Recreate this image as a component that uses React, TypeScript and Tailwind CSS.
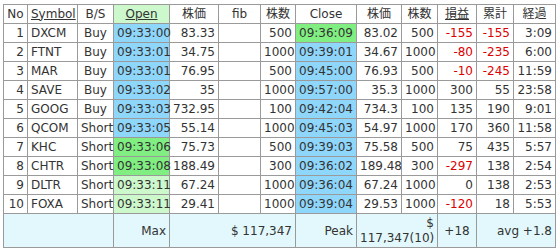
const font = { fontFamily: '"DejaVu Sans", "Noto Sans CJK JP", sans-serif' };

type Row = {
  no: number;
  sym: string;
  bs: string;
  open: string;
  openBg: string;
  price: string;
  qty: string;
  close: string;
  closeBg: string;
  cprice: string;
  cqty: string;
  pl: number;
  cum: number;
  elapsed: string;
};

const BLUE = "bg-[#8fd6fb]";
const GREEN = "bg-[#80ee80]";
const PALE = "bg-[#ccf8cc]";

const rows: Row[] = [
  { no: 1, sym: "DXCM", bs: "Buy", open: "09:33:00", openBg: BLUE, price: "83.33", qty: "500", close: "09:36:09", closeBg: GREEN, cprice: "83.02", cqty: "500", pl: -155, cum: -155, elapsed: "3:09" },
  { no: 2, sym: "FTNT", bs: "Buy", open: "09:33:01", openBg: BLUE, price: "34.75", qty: "1000", close: "09:39:01", closeBg: BLUE, cprice: "34.67", cqty: "1000", pl: -80, cum: -235, elapsed: "6:00" },
  { no: 3, sym: "MAR", bs: "Buy", open: "09:33:01", openBg: BLUE, price: "76.95", qty: "500", close: "09:45:00", closeBg: BLUE, cprice: "76.93", cqty: "500", pl: -10, cum: -245, elapsed: "11:59" },
  { no: 4, sym: "SAVE", bs: "Buy", open: "09:33:02", openBg: BLUE, price: "35", qty: "1000", close: "09:57:00", closeBg: BLUE, cprice: "35.3", cqty: "1000", pl: 300, cum: 55, elapsed: "23:58" },
  { no: 5, sym: "GOOG", bs: "Buy", open: "09:33:03", openBg: BLUE, price: "732.95", qty: "100", close: "09:42:04", closeBg: BLUE, cprice: "734.3", cqty: "100", pl: 135, cum: 190, elapsed: "9:01" },
  { no: 6, sym: "QCOM", bs: "Short", open: "09:33:05", openBg: BLUE, price: "55.14", qty: "1000", close: "09:45:03", closeBg: BLUE, cprice: "54.97", cqty: "1000", pl: 170, cum: 360, elapsed: "11:58" },
  { no: 7, sym: "KHC", bs: "Short", open: "09:33:06", openBg: GREEN, price: "75.73", qty: "500", close: "09:39:03", closeBg: BLUE, cprice: "75.58", cqty: "500", pl: 75, cum: 435, elapsed: "5:57" },
  { no: 8, sym: "CHTR", bs: "Short", open: "09:33:08", openBg: GREEN, price: "188.49", qty: "300", close: "09:36:02", closeBg: BLUE, cprice: "189.48", cqty: "300", pl: -297, cum: 138, elapsed: "2:54" },
  { no: 9, sym: "DLTR", bs: "Short", open: "09:33:11", openBg: PALE, price: "67.24", qty: "1000", close: "09:36:04", closeBg: BLUE, cprice: "67.24", cqty: "1000", pl: 0, cum: 138, elapsed: "2:53" },
  { no: 10, sym: "FOXA", bs: "Short", open: "09:33:11", openBg: PALE, price: "29.41", qty: "1000", close: "09:39:04", closeBg: BLUE, cprice: "29.53", cqty: "1000", pl: -120, cum: 18, elapsed: "5:53" },
];

const widths = [24, 50, 36, 56, 49, 42, 35, 61, 45, 36, 39, 37, 42];

const td = "border border-[#9a9a9a] px-[3px] h-[19px] leading-[17px] whitespace-nowrap";
const th = `${td} font-normal text-center`;

export default function App() {
  return (
    <div className="bg-white w-[559px] h-[252px] pl-[3px] pt-[4px] text-[12px] text-[#333]" style={font}>
      <table className="table-fixed border-collapse w-[552px]">
        <colgroup>
          {widths.map((w, i) => (
            <col key={i} style={{ width: w }} />
          ))}
        </colgroup>
        <thead>
          <tr>
            <th className={th}>No</th>
            <th className={th}><span className="underline">Symbol</span></th>
            <th className={th}>B/S</th>
            <th className={`${th} bg-[#ccf8cc]`}><span className="underline">Open</span></th>
            <th className={th}>株価</th>
            <th className={th}>fib</th>
            <th className={th}>株数</th>
            <th className={th}>Close</th>
            <th className={th}>株価</th>
            <th className={th}>株数</th>
            <th className={th}><span className="underline">損益</span></th>
            <th className={th}>累計</th>
            <th className={th}>経過</th>
          </tr>
        </thead>
        <tbody>
          {rows.map((r) => (
            <tr key={r.no}>
              <td className={`${td} text-right`}>{r.no}</td>
              <td className={`${td} text-left`}>{r.sym}</td>
              <td className={`${td} text-center`}>{r.bs}</td>
              <td className={`${td} ${r.openBg} text-center`}>{r.open}</td>
              <td className={`${td} text-right`}>{r.price}</td>
              <td className={td}></td>
              <td className={`${td} text-right`}>{r.qty}</td>
              <td className={`${td} ${r.closeBg} text-left`}>{r.close}</td>
              <td className={`${td} text-right`}>{r.cprice}</td>
              <td className={`${td} text-right`}>{r.cqty}</td>
              <td className={`${td} text-right ${r.pl < 0 ? "text-[#dd0000]" : ""}`}>{r.pl}</td>
              <td className={`${td} text-right ${r.cum < 0 ? "text-[#dd0000]" : ""}`}>{r.cum}</td>
              <td className={`${td} text-right`}>{r.elapsed}</td>
            </tr>
          ))}
          <tr className="bg-[#e2f8fc]">
            <td colSpan={3} className="border border-[#9a9a9a] h-[34px]"></td>
            <td className="border border-[#9a9a9a] px-[3px] text-right">Max</td>
            <td colSpan={3} className="border border-[#9a9a9a] px-[3px] text-right">$ 117,347</td>
            <td className="border border-[#9a9a9a] px-[3px] text-right">Peak</td>
            <td colSpan={2} className="border border-[#9a9a9a] px-[3px] text-right leading-[15px]">$ 117,347(10)</td>
            <td className="border border-[#9a9a9a] px-[3px] text-center">+18</td>
            <td colSpan={2} className="border border-[#9a9a9a] px-[3px] text-right">avg +1.8</td>
          </tr>
        </tbody>
      </table>
    </div>
  );
}
